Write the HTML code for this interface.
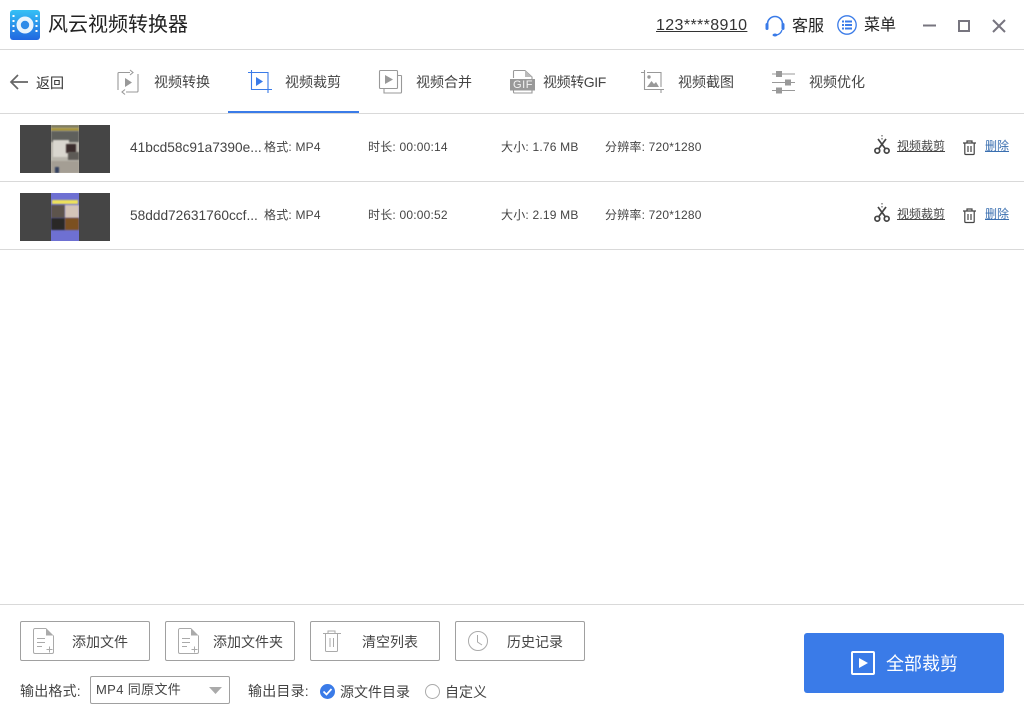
<!DOCTYPE html>
<html lang="zh"><head><meta charset="utf-8"><title>风云视频转换器</title>
<style>
html,body{margin:0;padding:0;background:#fff}
#p{position:relative;width:1024px;height:720px;overflow:hidden;background:#fff;font-family:"Liberation Sans","Noto Sans CJK SC",sans-serif;color:#444;font-size:14px}
.t{position:absolute;white-space:nowrap;line-height:18px}
.i{font-size:12px;letter-spacing:.2px}
.n{font-size:13.7px}
.l{position:absolute;left:0;width:1024px;height:1px;background:#d9d9d9}
svg{position:absolute;overflow:visible;fill:none}
.b{position:absolute;top:621px;width:128px;height:38px;border:1px solid #a0a0a0;border-radius:2px}
.th{position:absolute;left:20px;width:90px;height:48px;background:#454545;overflow:hidden}
.th b{position:absolute;left:31px;top:0;width:28px;height:48px;overflow:hidden;display:block}
.th i{position:absolute;display:block;filter:blur(.7px)}
.u{text-decoration:underline}
</style></head><body><div id="p">

<svg style="left:10px;top:10px" width="30" height="30" viewBox="0 0 30 30">
<defs><linearGradient id="g" x1="0" y1="0" x2="0" y2="1"><stop offset="0" stop-color="#35c0f5"/><stop offset="1" stop-color="#2167e0"/></linearGradient></defs>
<rect width="30" height="30" rx="3" fill="url(#g)"/>
<circle cx="15" cy="15" r="8.500" fill="#e9f4fd"/><circle cx="15" cy="15" r="4.200" fill="#2e8be8"/>
<g fill="#fff"><rect x="2.500" y="5" width="2" height="2"/><rect x="2.500" y="10" width="2" height="2"/><rect x="2.500" y="15" width="2" height="2"/><rect x="2.500" y="20" width="2" height="2"/><rect x="25.500" y="5" width="2" height="2"/><rect x="25.500" y="10" width="2" height="2"/><rect x="25.500" y="15" width="2" height="2"/><rect x="25.500" y="20" width="2" height="2"/></g>
</svg>
<div class="t" style="left:48px;top:12px;font-size:20px;line-height:26px;color:#222">风云视频转换器</div>

<div class="t u" style="left:656px;top:16px;font-size:16px;line-height:20px;color:#333;letter-spacing:.38px">123****8910</div>
<svg style="left:765px;top:15px" width="20" height="22" viewBox="0 0 20 22"><path d="M2.500 11V9a7.500 7.500 0 0 1 15 0v2" stroke="#3a7be8" stroke-width="1.600"/><rect x="0.500" y="8" width="3" height="7" rx="1.500" fill="#3a7be8"/><rect x="16.500" y="8" width="3" height="7" rx="1.500" fill="#3a7be8"/><path d="M17 15c-1 3-3 4.500-5.500 5" stroke="#3a7be8" stroke-width="1.300"/><ellipse cx="10" cy="20" rx="2.500" ry="1.500" fill="#3a7be8"/></svg>
<div class="t" style="left:792px;top:17px;font-size:16px;line-height:20px;color:#222">客服</div>
<svg style="left:837px;top:15px" width="20" height="20" viewBox="0 0 20 20"><circle cx="10" cy="10" r="9.200" stroke="#3a7be8" stroke-width="1.300"/><g fill="#3a7be8"><rect x="5" y="5.500" width="2" height="2"/><rect x="8" y="5.500" width="7" height="2"/><rect x="5" y="9" width="2" height="2"/><rect x="8" y="9" width="7" height="2"/><rect x="5" y="12.500" width="2" height="2"/><rect x="8" y="12.500" width="7" height="2"/></g></svg>
<div class="t" style="left:864px;top:16px;font-size:16px;line-height:20px;color:#222">菜单</div>
<svg style="left:923px;top:19px" width="90" height="14" viewBox="0 0 90 14"><path d="M0 6.500H13" stroke="#77757f" stroke-width="2"/><rect x="36" y="2" width="10" height="10" stroke="#77757f" stroke-width="2"/><path d="M70 1L82 13M82 1L70 13" stroke="#77757f" stroke-width="2"/></svg>
<div class="l" style="top:49px"></div>

<svg style="left:10px;top:74px" width="18" height="18" viewBox="0 0 18 18"><path d="M8 1L1 8l7 7M1 8h17" stroke="#666" stroke-width="1.700"/></svg>
<div class="t" style="left:36px;top:74px;color:#333">返回</div>

<svg style="left:117px;top:69px" width="22" height="27" viewBox="0 0 22 27" stroke="#999"><path d="M13 3.500H2a1 1 0 0 0-1 1V21M21 5v17a1 1 0 0 1-1 1H9" stroke-width="1.100"/><path d="M13 1l3 2.500L13 6M8 20.500L5 23l3 2.500" stroke-width="1.100"/><path d="M8 9l7 4.500-7 4.500z" fill="#999" stroke="none"/></svg>
<div class="t" style="left:154px;top:73px">视频转换</div>

<svg style="left:248px;top:70px" width="24" height="24" viewBox="0 0 24 24" stroke="#3a7be8" stroke-width="1.100"><path d="M0 2.500H20V19M3.500 0V19.500H24M20 19.500V23"/><path d="M8 7l7 4.500-7 4.500z" fill="#3a7be8" stroke="none"/></svg>
<div class="t" style="left:285px;top:73px">视频裁剪</div>
<div style="position:absolute;left:228px;top:111px;width:131px;height:3px;background:#3a7be8"></div>

<svg style="left:379px;top:70px" width="24" height="24" viewBox="0 0 24 24" stroke="#999" stroke-width="1.100"><rect x="0.500" y="0.500" width="18" height="18" rx="1"/><path d="M22.500 5.500V22a1 1 0 0 1-1 1H5V18.500M18.500 5.500h4"/><path d="M6 5l8 4.500L6 14z" fill="#999" stroke="none"/></svg>
<div class="t" style="left:416px;top:73px">视频合并</div>

<svg style="left:510px;top:70px" width="26" height="24" viewBox="0 0 26 24"><path d="M3.500 8V1.500a1 1 0 0 1 1-1H15l7 6.500v3M22 20v3H4.500a1 1 0 0 1-1-1v-2" stroke="#999" stroke-width="1.100"/><path d="M15 .5v6.500h7z" fill="#bbb"/><rect x="0" y="9" width="25" height="11.500" fill="#999"/></svg>
<div class="t" style="left:513px;top:79px;font-size:11px;line-height:12px;color:#f4f4f4;letter-spacing:.6px">GIF</div>
<div class="t" style="left:543px;top:73px;letter-spacing:-.4px">视频转GIF</div>

<svg style="left:641px;top:70px" width="24" height="24" viewBox="0 0 24 24" stroke="#999" stroke-width="1.100"><path d="M0 2.500h3.500M3.500 0V19.500H23M20 19.500V23M6 2.500H20V17"/><circle cx="8" cy="7" r="1.700" fill="#999" stroke="none"/><path d="M6 17l4.500-6 2.500 3 2-2 3 5z" fill="#999" stroke="none"/></svg>
<div class="t" style="left:678px;top:73px">视频截图</div>

<svg style="left:772px;top:70px" width="24" height="24" viewBox="0 0 24 24"><path d="M0 4h23M0 12.500h23M0 20.500h23" stroke="#999" stroke-width="1"/><g fill="#999"><rect x="4" y="1" width="6" height="6"/><rect x="13" y="9.500" width="6" height="6"/><rect x="4" y="17.500" width="6" height="6"/></g></svg>
<div class="t" style="left:809px;top:73px">视频优化</div>
<div class="l" style="top:113px"></div>

<div class="th" style="top:125px"><b style="background:#b9b6ad">
<i style="left:0;top:0;width:28px;height:3px;background:#7d7a60"></i>
<i style="left:0;top:3px;width:28px;height:3px;background:#a8963c"></i>
<i style="left:0;top:6px;width:28px;height:11px;background:#5f605c"></i>
<i style="left:2px;top:15px;width:16px;height:17px;background:#d9d6cf"></i>
<i style="left:15px;top:19px;width:10px;height:9px;background:#3a2c2c"></i>
<i style="left:17px;top:27px;width:11px;height:8px;background:#5d5a56"></i>
<i style="left:0;top:36px;width:28px;height:12px;background:#a49e94"></i>
<i style="left:4px;top:42px;width:4px;height:6px;background:#34405f"></i>
</b></div>
<div class="t n" style="left:130px;top:139px">41bcd58c91a7390e...</div>
<div class="t i" style="left:264px;top:138px">格式: MP4</div>
<div class="t i" style="left:368px;top:138px">时长: 00:00:14</div>
<div class="t i" style="left:501px;top:138px">大小: 1.76 MB</div>
<div class="t i" style="left:605px;top:138px">分辨率: 720*1280</div>
<svg style="left:874px;top:135px" width="16" height="19" viewBox="0 0 16 19" stroke="#444"><path d="M8 0v6" stroke-dasharray="1.500 1.500"/><path d="M4 4l7.500 10M12 4L4.500 14" stroke-width="1.700"/><circle cx="3.300" cy="15.700" r="2.400" stroke-width="1.700"/><circle cx="12.700" cy="15.700" r="2.400" stroke-width="1.700"/></svg>
<div class="t u" style="left:897px;top:137px;font-size:12px">视频裁剪</div>
<svg style="left:963px;top:140px" width="13" height="15" viewBox="0 0 13 15" stroke="#444" stroke-width="1.200"><path d="M0 3h13M4 3V1h5v2M1.800 3v10.500a1 1 0 0 0 1 1h7.400a1 1 0 0 0 1-1V3M5 6v6M8 6v6"/></svg>
<div class="t u" style="left:985px;top:137px;font-size:12px;color:#3a6fb0">删除</div>
<div class="l" style="top:181px"></div>

<div class="th" style="top:193px"><b style="background:#6e70d2">
<i style="left:1px;top:7px;width:26px;height:4px;background:#eee25a"></i>
<i style="left:0;top:12px;width:14px;height:13px;background:#5d544c"></i>
<i style="left:14px;top:12px;width:14px;height:13px;background:#d4c4b8"></i>
<i style="left:0;top:25px;width:14px;height:12px;background:#2a2826"></i>
<i style="left:14px;top:25px;width:14px;height:12px;background:#7c5020"></i>
</b></div>
<div class="t n" style="left:130px;top:207px">58ddd72631760ccf...</div>
<div class="t i" style="left:264px;top:206px">格式: MP4</div>
<div class="t i" style="left:368px;top:206px">时长: 00:00:52</div>
<div class="t i" style="left:501px;top:206px">大小: 2.19 MB</div>
<div class="t i" style="left:605px;top:206px">分辨率: 720*1280</div>
<svg style="left:874px;top:203px" width="16" height="19" viewBox="0 0 16 19" stroke="#444"><path d="M8 0v6" stroke-dasharray="1.500 1.500"/><path d="M4 4l7.500 10M12 4L4.500 14" stroke-width="1.700"/><circle cx="3.300" cy="15.700" r="2.400" stroke-width="1.700"/><circle cx="12.700" cy="15.700" r="2.400" stroke-width="1.700"/></svg>
<div class="t u" style="left:897px;top:205px;font-size:12px">视频裁剪</div>
<svg style="left:963px;top:208px" width="13" height="15" viewBox="0 0 13 15" stroke="#444" stroke-width="1.200"><path d="M0 3h13M4 3V1h5v2M1.800 3v10.500a1 1 0 0 0 1 1h7.400a1 1 0 0 0 1-1V3M5 6v6M8 6v6"/></svg>
<div class="t u" style="left:985px;top:205px;font-size:12px;color:#3a6fb0">删除</div>
<div class="l" style="top:249px"></div>

<div class="l" style="top:604px"></div>

<div class="b" style="left:20px"></div>
<svg style="left:33px;top:628px" width="21" height="26" viewBox="0 0 21 26" stroke="#aaa"><path d="M13 .5H2A1.500 1.500 0 0 0 .5 2v22A1.500 1.500 0 0 0 2 25.500h17a1.500 1.500 0 0 0 1.500-1.500V7.500"/><path d="M13 0l7.500 7.500H13z" fill="#aaa" stroke="none"/><path d="M4 10.500h8M4 14.500h8M4 18.500h5M13.500 21.500h6M16.500 18.500v6"/></svg>
<div class="t" style="left:72px;top:633px">添加文件</div>

<div class="b" style="left:165px"></div>
<svg style="left:178px;top:628px" width="21" height="26" viewBox="0 0 21 26" stroke="#aaa"><path d="M13 .5H2A1.500 1.500 0 0 0 .5 2v22A1.500 1.500 0 0 0 2 25.500h17a1.500 1.500 0 0 0 1.500-1.500V7.500"/><path d="M13 0l7.500 7.500H13z" fill="#aaa" stroke="none"/><path d="M4 10.500h8M4 14.500h8M4 18.500h5M13.500 21.500h6M16.500 18.500v6"/></svg>
<div class="t" style="left:213px;top:633px">添加文件夹</div>

<div class="b" style="left:310px"></div>
<svg style="left:323px;top:630px" width="18" height="22" viewBox="0 0 18 22" stroke="#aaa"><path d="M0 3.500h18M5 3.500V1h7v2.500M2.500 3.500v17a1 1 0 0 0 1 1h10a1 1 0 0 0 1-1v-17M7 8v9M10.500 8v9"/></svg>
<div class="t" style="left:362px;top:633px">清空列表</div>

<div class="b" style="left:455px"></div>
<svg style="left:468px;top:631px" width="20" height="20" viewBox="0 0 20 20" stroke="#aaa"><circle cx="10" cy="10" r="9.500"/><path d="M9.500 4v7l4.500 3"/></svg>
<div class="t" style="left:507px;top:633px">历史记录</div>

<div class="t" style="left:20px;top:682px;letter-spacing:.2px">输出格式:</div>
<div style="position:absolute;left:90px;top:676px;width:138px;height:26px;border:1px solid #a0a0a0;border-radius:2px"></div>
<div class="t" style="left:96px;top:681px;font-size:13px;letter-spacing:.35px">MP4 同原文件</div>
<svg style="left:209px;top:687px" width="13" height="7" viewBox="0 0 13 7"><path d="M0 0h13L6.500 7z" fill="#aaa"/></svg>
<div class="t" style="left:248px;top:682px;letter-spacing:.2px">输出目录:</div>
<svg style="left:320px;top:684px" width="15" height="15" viewBox="0 0 15 15"><circle cx="7.500" cy="7.500" r="7.500" fill="#3a7be8"/><path d="M3.500 7.500l3 3 5-5.500" stroke="#fff" stroke-width="1.700"/></svg>
<div class="t" style="left:340px;top:683px">源文件目录</div>
<svg style="left:425px;top:684px" width="15" height="15" viewBox="0 0 15 15"><circle cx="7.500" cy="7.500" r="7" stroke="#aaa"/></svg>
<div class="t" style="left:445px;top:683px">自定义</div>

<div style="position:absolute;left:804px;top:633px;width:200px;height:60px;background:#3a7be8;border-radius:3px"></div>
<svg style="left:851px;top:651px" width="24" height="24" viewBox="0 0 24 24"><rect x="1" y="1" width="22" height="22" rx="1" stroke="#fff" stroke-width="2"/><path d="M8 7l9 5-9 5z" fill="#fff"/></svg>
<div class="t" style="left:886px;top:652px;font-size:18px;line-height:24px;color:#fff">全部裁剪</div>

</div></body></html>
